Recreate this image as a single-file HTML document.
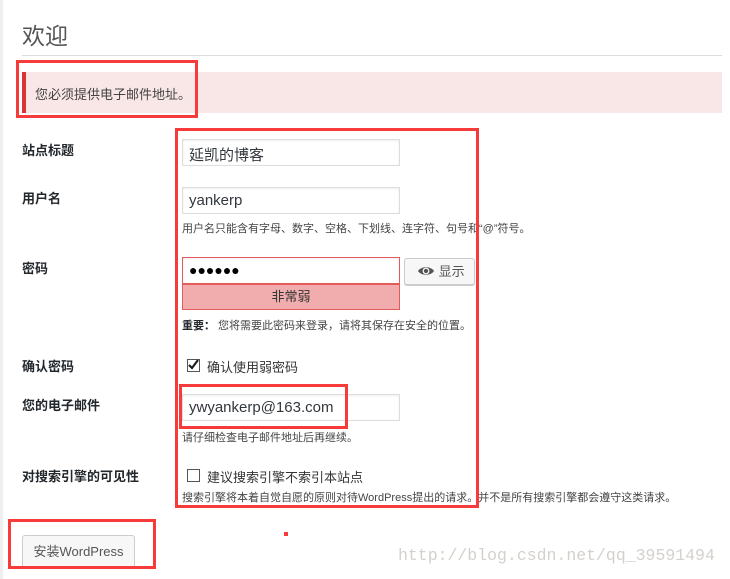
<!DOCTYPE html>
<html><head><meta charset="utf-8"><style>
*{margin:0;padding:0;box-sizing:border-box}
body{width:730px;height:579px;background:#fff;position:relative;overflow:hidden;font-family:"Liberation Sans","Noto Sans CJK SC",sans-serif;color:#444}
.a{position:absolute;white-space:nowrap}
.lbl{position:absolute;left:22px;font-size:13px;font-weight:bold;color:#23282d}
.inp{position:absolute;left:182px;width:218px;height:27px;border:1px solid #ddd;box-shadow:inset 0 1px 2px rgba(0,0,0,.07);font-size:15px;color:#32373c;padding:4px 0 0 6px}
.hint{position:absolute;left:182px;font-size:11px;color:#444}
.rb{position:absolute;border:3px solid #f73b3b}
.cb{position:absolute;left:187px;width:13px;height:13px;border:1px solid #555;background:#fff}
</style></head><body>
<div class="a" style="left:0;top:0;width:3px;height:579px;background:#eee"></div>
<div class="a" style="left:22px;top:17px;font-size:23px;color:#555">欢迎</div>
<div class="a" style="left:22px;top:55px;width:700px;height:1px;background:#ddd"></div>
<div class="a" style="left:22px;top:72px;width:700px;height:41px;background:#f9e6e6;border-left:4px solid #dc3232"></div>
<div class="a" style="left:35px;top:84px;font-size:13px;color:#444">您必须提供电子邮件地址。</div>

<div class="lbl" style="top:140px">站点标题</div>
<div class="lbl" style="top:188px">用户名</div>
<div class="lbl" style="top:258px">密码</div>
<div class="lbl" style="top:356px">确认密码</div>
<div class="lbl" style="top:395px">您的电子邮件</div>
<div class="lbl" style="top:466px">对搜索引擎的可见性</div>

<div class="inp" style="top:139px">延凯的博客</div>
<div class="inp" style="top:187px">yankerp</div>
<div class="hint" style="top:220px">用户名只能含有字母、数字、空格、下划线、连字符、句号和“@”符号。</div>
<div class="inp" style="top:257px;border-color:#e35b5b;font-size:14px;letter-spacing:0;padding-top:4px;color:#000">●●●●●●</div>
<div class="a" style="left:182px;top:284px;width:218px;height:26px;background:#f1adad;border:1px solid #e35b5b;font-size:13px;color:#333;text-align:center;line-height:24px">非常弱</div>
<div class="a" style="left:404px;top:258px;width:71px;height:27px;border:1px solid #ccc;border-radius:3px;background:#f7f7f7;box-shadow:0 1px 0 #ccc;font-size:13px;color:#555;line-height:25px;padding-left:12px">
<svg width="18" height="12" viewBox="0 0 18 12" style="vertical-align:-1px"><path d="M1 6C4 1 14 1 17 6C14 11 4 11 1 6Z" fill="#555"/><circle cx="9" cy="6" r="3.4" fill="#fff"/><circle cx="9" cy="6" r="2.2" fill="#555"/></svg> 显示</div>
<div class="hint" style="top:317px"><b style="color:#23282d">重要：</b> 您将需要此密码来登录，请将其保存在安全的位置。</div>
<div class="cb" style="top:359px"><svg width="13" height="13" viewBox="0 0 13 13" style="position:absolute;left:-1px;top:-2px"><path d="M2 7L5 10L11 2" stroke="#1e1e1e" stroke-width="2.2" fill="none"/></svg></div>
<div class="a" style="left:207px;top:357px;font-size:13px;color:#333">确认使用弱密码</div>
<div class="inp" style="top:394px">ywyankerp@163.com</div>
<div class="hint" style="top:429px">请仔细检查电子邮件地址后再继续。</div>
<div class="cb" style="top:469px"></div>
<div class="a" style="left:207px;top:467px;font-size:13px;color:#333">建议搜索引擎不索引本站点</div>
<div class="hint" style="top:489px">搜索引擎将本着自觉自愿的原则对待WordPress提出的请求。并不是所有搜索引擎都会遵守这类请求。</div>

<div class="a" style="left:22px;top:535px;width:113px;height:33px;border:1px solid #ccc;border-radius:3px;background:#f7f7f7;box-shadow:0 1px 0 #ccc;font-size:13px;color:#555;text-align:center;line-height:31px">安装WordPress</div>

<div class="rb" style="left:16px;top:60px;width:182px;height:58px"></div>
<div class="rb" style="left:175px;top:128px;width:304px;height:380px"></div>
<div class="rb" style="left:179px;top:384px;width:169px;height:45px"></div>
<div class="rb" style="left:8px;top:519px;width:148px;height:50px"></div>
<div class="a" style="left:284px;top:532px;width:4px;height:4px;background:#f73b3b"></div>
<div class="a" style="left:398px;top:546px;font-family:'Liberation Mono',monospace;font-size:16.5px;color:#d4d1cc">http://blog.csdn.net/qq_39591494</div>
</body></html>
